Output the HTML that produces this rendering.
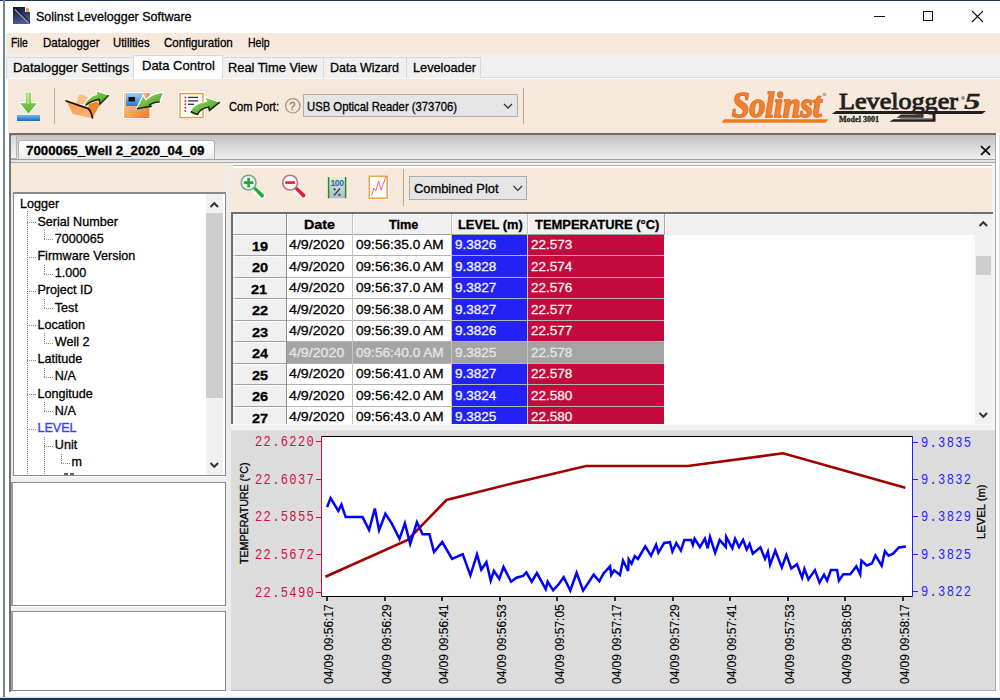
<!DOCTYPE html>
<html><head><meta charset="utf-8">
<style>
*{box-sizing:border-box;margin:0;padding:0}
html,body{width:1000px;height:700px;overflow:hidden;background:#fff;font-family:"Liberation Sans",sans-serif;color:#000;position:relative}
.a{position:absolute}
.t{position:absolute;white-space:pre;line-height:1;-webkit-text-stroke:0.3px currentColor}
svg{position:absolute;overflow:visible}
</style></head><body>
<div class="a" style="left:0px;top:0px;width:1000px;height:1px;background:#1b355a"></div>
<div class="a" style="left:3px;top:0px;width:2px;height:700px;background:#6d879a"></div>
<div class="a" style="left:0px;top:697px;width:1000px;height:1px;background:#d8dde2"></div>
<div class="a" style="left:0px;top:698px;width:1000px;height:2px;background:#163a5e"></div>
<svg style="left:13px;top:7px;" width="18" height="18" viewBox="0 0 18 18"><defs><linearGradient id="ti" x1="0" y1="0" x2="0.3" y2="1"><stop offset="0" stop-color="#0c1228"/><stop offset="1" stop-color="#4a5c9c"/></linearGradient></defs>
<rect x="0" y="0" width="17" height="17" fill="url(#ti)"/><rect x="12" y="0" width="5" height="5" fill="#fff"/><rect x="13" y="1" width="3" height="4" fill="#e8a85c"/>
<line x1="2" y1="2.5" x2="15.5" y2="16" stroke="#9a9aa0" stroke-width="1.3"/><line x1="3.5" y1="2" x2="17" y2="15.5" stroke="#0a0a10" stroke-width="1"/></svg>
<div class="a" style="left:874px;top:16px;width:11px;height:1px;background:#111"></div>
<div class="a" style="left:923px;top:11px;width:10px;height:10px;border:1px solid #111"></div>
<svg style="left:971px;top:10px;" width="13" height="13" viewBox="0 0 13 13"><path d="M1 1 L12 12 M12 1 L1 12" stroke="#111" stroke-width="1.1"/></svg>
<div class="a" style="left:6px;top:33px;width:994px;height:21px;background:#f6e9dc"></div>
<div class="a" style="left:6px;top:54px;width:994px;height:24px;background:#f0f0f0;border-bottom:1px solid #d9d9d9"></div>
<div class="a" style="left:6px;top:78px;width:994px;height:1px;background:#fbfbfb"></div>
<div class="a" style="left:6px;top:57px;width:128px;height:21px;background:#f0f0f0;border:1px solid #d9d9d9;border-bottom:none"></div>
<div class="a" style="left:222px;top:57px;width:102px;height:21px;background:#f0f0f0;border:1px solid #d9d9d9;border-bottom:none"></div>
<div class="a" style="left:323px;top:57px;width:84px;height:21px;background:#f0f0f0;border:1px solid #d9d9d9;border-bottom:none"></div>
<div class="a" style="left:406px;top:57px;width:75px;height:21px;background:#f0f0f0;border:1px solid #d9d9d9;border-bottom:none"></div>
<div class="a" style="left:133px;top:55px;width:90px;height:24px;background:#fff;border:1px solid #d9d9d9;border-bottom:none"></div>
<div class="a" style="left:8px;top:79px;width:992px;height:54px;background:#f6e9dc"></div>
<div class="a" style="left:54px;top:88px;width:1px;height:36px;background:#b8b0a8"></div>
<div class="a" style="left:303px;top:94px;width:215px;height:23px;background:#e5e5e5;border:1px solid #adadad"></div>
<div class="a" style="left:523px;top:88px;width:1px;height:36px;background:#b0a89e"></div>
<div class="a" style="left:9px;top:133px;width:987px;height:2px;background:#6c6c6c"></div>
<div class="a" style="left:9px;top:133px;width:2px;height:559px;background:#747474"></div>
<div class="a" style="left:11px;top:135px;width:985px;height:24px;background:linear-gradient(#c2c2c2,#d4d4d4 40%,#eeeeee)"></div>
<div class="a" style="left:11px;top:136px;width:6px;height:23px;background:linear-gradient(#d8d8d8,#f4f4f4);border-right:1px solid #b4b4b4;border-bottom:1px solid #b4b4b4"></div>
<div class="a" style="left:18px;top:140px;width:197px;height:20px;background:linear-gradient(#ffffff,#f6f6f6 60%,#e8e8e8);border:1px solid #b0b0b0;border-bottom:none;border-radius:3px 3px 0 0"></div>
<div class="a" style="left:11px;top:159px;width:985px;height:1px;background:#a0a0a0"></div>
<div class="a" style="left:11px;top:160px;width:985px;height:2px;background:#e4e6e6"></div>
<div class="a" style="left:11px;top:162px;width:985px;height:1px;background:#a8a8a8"></div>
<div class="a" style="left:995px;top:135px;width:1px;height:556px;background:#aaaaaa"></div>
<div class="a" style="left:999px;top:135px;width:1px;height:556px;background:#e2e2e2"></div>
<div class="a" style="left:11px;top:163px;width:215px;height:30px;background:#f6e9dc"></div>
<div class="a" style="left:11px;top:193px;width:2px;height:283px;background:#ebebeb"></div>
<div class="a" style="left:13px;top:192px;width:213px;height:284px;background:#fff;border:1px solid #8a8a8a;border-top:2px solid #8a8a8a"></div>
<div class="a" style="left:206px;top:194px;width:17px;height:281px;background:#f0f0f0"></div>
<div class="a" style="left:206px;top:213px;width:17px;height:185px;background:#cdcdcd"></div>
<div class="a" style="left:11px;top:476px;width:215px;height:6px;background:#efefef;border-top:1px solid #fcfcfc"></div>
<div class="a" style="left:11px;top:482px;width:215px;height:124px;background:#fff;border:1px solid #8a8a8a;border-left:2px solid #9a9a9a"></div>
<div class="a" style="left:11px;top:606px;width:215px;height:5px;background:#efefef;border-top:1px solid #fcfcfc"></div>
<div class="a" style="left:11px;top:611px;width:215px;height:80px;background:#fff;border:1px solid #8a8a8a;border-left:2px solid #9a9a9a"></div>
<div class="a" style="left:11px;top:691px;width:985px;height:6px;background:#fbfbfb"></div>
<div class="a" style="left:64px;top:473px;width:4px;height:2px;background:#3a3a4a;opacity:0.8"></div>
<div class="a" style="left:70px;top:473px;width:4px;height:2px;background:#3a3a4a;opacity:0.8"></div>
<div class="a" style="left:226px;top:163px;width:5px;height:528px;background:#ececec"></div>
<div class="a" style="left:231px;top:163px;width:762px;height:49px;background:#f6e9dc"></div>
<div class="a" style="left:231px;top:163px;width:762px;height:2px;background:#fcf5e6"></div>
<div class="a" style="left:233px;top:165px;width:759px;height:1px;background:#b0b0b0"></div>
<div class="a" style="left:233px;top:166px;width:759px;height:1.5px;background:#fdfdfd"></div>
<div class="a" style="left:992px;top:163px;width:3px;height:49px;background:#f4f4f4"></div>
<div class="a" style="left:403px;top:169px;width:1px;height:37px;background:#b0a89e"></div>
<div class="a" style="left:409px;top:176px;width:118px;height:24px;background:#e5e5e5;border:1px solid #adadad"></div>
<div class="a" style="left:231px;top:212px;width:762px;height:2px;background:#6e6e6e"></div>
<div class="a" style="left:231px;top:212px;width:2px;height:212px;background:#6e6e6e"></div>
<div class="a" style="left:233px;top:214px;width:742px;height:210px;background:#fff"></div>
<div class="a" style="left:233px;top:214px;width:742px;height:21px;background:#f0f0f0"></div>
<div class="a" style="left:233px;top:234px;width:431px;height:1px;background:#a0a0a0"></div>
<div class="a" style="left:233px;top:214px;width:738px;height:1px;background:#fcfcfc"></div>
<div class="a" style="left:971px;top:235px;width:4px;height:189px;background:#fbfbfb"></div>
<div class="a" style="left:975px;top:214px;width:17px;height:210px;background:#f0f0f0"></div>
<div class="a" style="left:975.5px;top:256px;width:15.5px;height:19px;background:#cdcdcd"></div>
<div class="a" style="left:231px;top:424px;width:764px;height:7px;background:#f0f0f0;border-top:1px solid #fafafa"></div>
<div class="a" style="left:992px;top:214px;width:3px;height:216px;background:#f4f4f4"></div>
<div class="a" style="left:233px;top:235px;width:53px;height:20px;background:#f0f0f0"></div>
<div class="a" style="left:233px;top:235px;width:53px;height:1px;background:#fcfcfc"></div>
<div class="a" style="left:452px;top:235px;width:75px;height:20px;background:#2222f4"></div>
<div class="a" style="left:528px;top:235px;width:136px;height:20px;background:#c40a3c"></div>
<div class="a" style="left:233px;top:255px;width:431px;height:1px;background:#b4b4b4"></div>
<div class="a" style="left:233px;top:255px;width:53px;height:1px;background:#a0a0a0"></div>
<div class="a" style="left:233px;top:256px;width:53px;height:21px;background:#f0f0f0"></div>
<div class="a" style="left:233px;top:256px;width:53px;height:1px;background:#fcfcfc"></div>
<div class="a" style="left:452px;top:256px;width:75px;height:21px;background:#2222f4"></div>
<div class="a" style="left:528px;top:256px;width:136px;height:21px;background:#c40a3c"></div>
<div class="a" style="left:233px;top:277px;width:431px;height:1px;background:#b4b4b4"></div>
<div class="a" style="left:233px;top:277px;width:53px;height:1px;background:#a0a0a0"></div>
<div class="a" style="left:233px;top:278px;width:53px;height:20px;background:#f0f0f0"></div>
<div class="a" style="left:233px;top:278px;width:53px;height:1px;background:#fcfcfc"></div>
<div class="a" style="left:452px;top:278px;width:75px;height:20px;background:#2222f4"></div>
<div class="a" style="left:528px;top:278px;width:136px;height:20px;background:#c40a3c"></div>
<div class="a" style="left:233px;top:298px;width:431px;height:1px;background:#b4b4b4"></div>
<div class="a" style="left:233px;top:298px;width:53px;height:1px;background:#a0a0a0"></div>
<div class="a" style="left:233px;top:299px;width:53px;height:21px;background:#f0f0f0"></div>
<div class="a" style="left:233px;top:299px;width:53px;height:1px;background:#fcfcfc"></div>
<div class="a" style="left:452px;top:299px;width:75px;height:21px;background:#2222f4"></div>
<div class="a" style="left:528px;top:299px;width:136px;height:21px;background:#c40a3c"></div>
<div class="a" style="left:233px;top:320px;width:431px;height:1px;background:#b4b4b4"></div>
<div class="a" style="left:233px;top:320px;width:53px;height:1px;background:#a0a0a0"></div>
<div class="a" style="left:233px;top:321px;width:53px;height:20px;background:#f0f0f0"></div>
<div class="a" style="left:233px;top:321px;width:53px;height:1px;background:#fcfcfc"></div>
<div class="a" style="left:452px;top:321px;width:75px;height:20px;background:#2222f4"></div>
<div class="a" style="left:528px;top:321px;width:136px;height:20px;background:#c40a3c"></div>
<div class="a" style="left:233px;top:341px;width:431px;height:1px;background:#b4b4b4"></div>
<div class="a" style="left:233px;top:341px;width:53px;height:1px;background:#a0a0a0"></div>
<div class="a" style="left:233px;top:342px;width:53px;height:21px;background:#f0f0f0"></div>
<div class="a" style="left:233px;top:342px;width:53px;height:1px;background:#fcfcfc"></div>
<div class="a" style="left:287px;top:342px;width:377px;height:21px;background:#a4a4a4"></div>
<div class="a" style="left:233px;top:363px;width:431px;height:1px;background:#b4b4b4"></div>
<div class="a" style="left:233px;top:363px;width:53px;height:1px;background:#a0a0a0"></div>
<div class="a" style="left:233px;top:364px;width:53px;height:20px;background:#f0f0f0"></div>
<div class="a" style="left:233px;top:364px;width:53px;height:1px;background:#fcfcfc"></div>
<div class="a" style="left:452px;top:364px;width:75px;height:20px;background:#2222f4"></div>
<div class="a" style="left:528px;top:364px;width:136px;height:20px;background:#c40a3c"></div>
<div class="a" style="left:233px;top:384px;width:431px;height:1px;background:#b4b4b4"></div>
<div class="a" style="left:233px;top:384px;width:53px;height:1px;background:#a0a0a0"></div>
<div class="a" style="left:233px;top:385px;width:53px;height:21px;background:#f0f0f0"></div>
<div class="a" style="left:233px;top:385px;width:53px;height:1px;background:#fcfcfc"></div>
<div class="a" style="left:452px;top:385px;width:75px;height:21px;background:#2222f4"></div>
<div class="a" style="left:528px;top:385px;width:136px;height:21px;background:#c40a3c"></div>
<div class="a" style="left:233px;top:406px;width:431px;height:1px;background:#b4b4b4"></div>
<div class="a" style="left:233px;top:406px;width:53px;height:1px;background:#a0a0a0"></div>
<div class="a" style="left:233px;top:407px;width:53px;height:17px;background:#f0f0f0"></div>
<div class="a" style="left:233px;top:407px;width:53px;height:1px;background:#fcfcfc"></div>
<div class="a" style="left:452px;top:407px;width:75px;height:17px;background:#2222f4"></div>
<div class="a" style="left:528px;top:407px;width:136px;height:17px;background:#c40a3c"></div>
<div class="a" style="left:286px;top:214px;width:1px;height:210px;background:#8c8c8c"></div>
<div class="a" style="left:352px;top:214px;width:1px;height:210px;background:#c4c4c4"></div>
<div class="a" style="left:451px;top:214px;width:1px;height:210px;background:#c4c4c4"></div>
<div class="a" style="left:527px;top:214px;width:1px;height:210px;background:#c4c4c4"></div>
<div class="a" style="left:664px;top:214px;width:1px;height:21px;background:#a8a8a8"></div>
<div class="a" style="left:665px;top:214px;width:1px;height:21px;background:#fcfcfc"></div>
<div class="a" style="left:234px;top:215px;width:1px;height:19px;background:#fcfcfc"></div>
<div class="a" style="left:287px;top:215px;width:1px;height:19px;background:#fcfcfc"></div>
<div class="a" style="left:353px;top:215px;width:1px;height:19px;background:#fcfcfc"></div>
<div class="a" style="left:452px;top:215px;width:1px;height:19px;background:#fcfcfc"></div>
<div class="a" style="left:528px;top:215px;width:1px;height:19px;background:#fcfcfc"></div>
<div class="a" style="left:234px;top:235px;width:1px;height:189px;background:#fbfbfb"></div>
<div class="a" style="left:231px;top:430px;width:764px;height:261px;background:#dcdcdc"></div>
<div class="a" style="left:231px;top:430px;width:764px;height:1px;background:#e4e4e4"></div>
<div class="a" style="left:231px;top:690px;width:764px;height:1px;background:#b4b4b4"></div>
<div class="a" style="left:321px;top:436px;width:592px;height:161px;background:#fff"></div>
<div class="a" style="left:321px;top:436px;width:591px;height:1px;background:#000"></div>
<div class="a" style="left:321px;top:596px;width:592px;height:1px;background:#000"></div>
<div class="a" style="left:321px;top:436px;width:1px;height:161px;background:#cc1040"></div>
<div class="a" style="left:912px;top:436px;width:1px;height:161px;background:#2020ff"></div>
<div class="a" style="left:316px;top:441px;width:5px;height:1px;background:#cc1144"></div>
<div class="a" style="left:316px;top:479px;width:5px;height:1px;background:#cc1144"></div>
<div class="a" style="left:316px;top:517px;width:5px;height:1px;background:#cc1144"></div>
<div class="a" style="left:316px;top:554px;width:5px;height:1px;background:#cc1144"></div>
<div class="a" style="left:316px;top:592px;width:5px;height:1px;background:#cc1144"></div>
<div class="a" style="left:913px;top:442px;width:5px;height:1px;background:#2424ff"></div>
<div class="a" style="left:913px;top:479px;width:5px;height:1px;background:#2424ff"></div>
<div class="a" style="left:913px;top:516px;width:5px;height:1px;background:#2424ff"></div>
<div class="a" style="left:913px;top:554px;width:5px;height:1px;background:#2424ff"></div>
<div class="a" style="left:913px;top:591px;width:5px;height:1px;background:#2424ff"></div>
<div class="a" style="left:326.0px;top:597px;width:2px;height:4px;background:#303030"></div>
<div class="a" style="left:384.0px;top:597px;width:2px;height:4px;background:#303030"></div>
<div class="a" style="left:441.0px;top:597px;width:2px;height:4px;background:#303030"></div>
<div class="a" style="left:499.0px;top:597px;width:2px;height:4px;background:#303030"></div>
<div class="a" style="left:556.0px;top:597px;width:2px;height:4px;background:#303030"></div>
<div class="a" style="left:614.0px;top:597px;width:2px;height:4px;background:#303030"></div>
<div class="a" style="left:672.0px;top:597px;width:2px;height:4px;background:#303030"></div>
<div class="a" style="left:729.0px;top:597px;width:2px;height:4px;background:#303030"></div>
<div class="a" style="left:787.0px;top:597px;width:2px;height:4px;background:#303030"></div>
<div class="a" style="left:844.0px;top:597px;width:2px;height:4px;background:#303030"></div>
<div class="a" style="left:902.0px;top:597px;width:2px;height:4px;background:#303030"></div>
<svg style="left:0;top:0" width="1000" height="700"><defs>
<linearGradient id="gArrow" x1="0" y1="0" x2="1" y2="0"><stop offset="0" stop-color="#a6dc6a"/><stop offset="0.5" stop-color="#7cc444"/><stop offset="1" stop-color="#4e9e22"/></linearGradient>
<linearGradient id="gArrowV" x1="0" y1="0" x2="0" y2="1"><stop offset="0" stop-color="#a8dc70"/><stop offset="1" stop-color="#58b02a"/></linearGradient>
<linearGradient id="gBlueBar" x1="0" y1="0" x2="0" y2="1"><stop offset="0" stop-color="#78b8f0"/><stop offset="1" stop-color="#1468c0"/></linearGradient>
<linearGradient id="gOrange" x1="0" y1="0" x2="1" y2="1"><stop offset="0" stop-color="#fbd2a6"/><stop offset="1" stop-color="#f07a22"/></linearGradient>
<linearGradient id="gOrange2" x1="0" y1="0" x2="0.4" y2="1"><stop offset="0" stop-color="#f89a48"/><stop offset="1" stop-color="#f8b070"/></linearGradient>
<linearGradient id="gBlueLbl" x1="0" y1="0" x2="0" y2="1"><stop offset="0" stop-color="#9ad0f4"/><stop offset="1" stop-color="#2a7ccc"/></linearGradient>
<linearGradient id="gGreenArr" x1="0" y1="0" x2="1" y2="1"><stop offset="0" stop-color="#a0dc68"/><stop offset="1" stop-color="#3c9a1c"/></linearGradient>
</defs>
<path d="M24.3 91 H32.7 V101.6 H40.2 L28.5 115.5 L16.8 101.6 H24.3 Z" fill="#fff" stroke="#e0d8d0" stroke-width="0.6"/>
<path d="M25.8 92.5 H31.2 V103.2 H37 L28.5 113.4 L20 103.2 H25.8 Z" fill="url(#gArrowV)"/>
<path d="M26.8 93 H29.3 V104 H26.8 Z" fill="#d0f0b0" opacity="0.6"/>
<rect x="17" y="115" width="23" height="6" fill="url(#gBlueBar)"/>
<path d="M76 104 L79 94.5 L83 95 L87 97 L90 104 Z" fill="#f9b880" opacity="0.9"/>
<path d="M88 108 L92.5 119 L100.5 104.5 L97 101 L88 104 Z" fill="#f08428" stroke="#fff" stroke-width="0.8"/>
<path d="M66 101 L88.5 108.8 L92.8 118.8 L72.5 114.5 Z" fill="url(#gOrange2)" stroke="#fff" stroke-width="0.6"/>
<path d="M65.5 100.8 L88.3 108.6 Q91.5 112 92.6 118.6" fill="none" stroke="#1a1008" stroke-width="1.7"/>
<path d="M84.5 103.8 Q88 97 96.8 94.2 L96 90.8 L108.6 95 L100 104 L99.3 99.2 Q92 100 86 105.5 Z" fill="url(#gGreenArr)" stroke="#fff" stroke-width="1.1"/>
<path d="M85.5 105.5 Q92 100.2 99.3 99.4 L100 104 L108.6 95.2" fill="none" stroke="#14300a" stroke-width="1.6"/>
<rect x="122.5" y="91.5" width="28.5" height="28" fill="#fff" stroke="#ddd" stroke-width="0.6"/>
<rect x="124" y="93" width="25.5" height="25" fill="url(#gOrange)"/>
<rect x="126" y="93" width="16" height="13" fill="url(#gBlueLbl)"/>
<rect x="128.5" y="97" width="6.5" height="4.5" fill="#181010"/>
<rect x="147" y="93" width="2.5" height="3" fill="#e89050"/>
<path d="M136.3 109 L143.3 95 L145.8 99.8 Q152 93.5 163.8 92.2 Q161.5 97.5 159.8 101.8 Q154 101.5 149.8 104.5 L150.8 106.5 Z" fill="url(#gGreenArr)" stroke="#fff" stroke-width="1.2"/>
<path d="M136.8 108.8 L150.8 106.3 L149.8 104.5 Q154 101.8 159.8 101.8" fill="none" stroke="#10280a" stroke-width="1.6"/>
<rect x="177.8" y="91" width="27.4" height="28.6" fill="#fff" stroke="#ddd" stroke-width="0.6"/>
<rect x="180" y="93.6" width="23" height="24" fill="none" stroke="#eb9a30" stroke-width="1.4"/>
<g fill="#e8202a"><circle cx="185.4" cy="97.4" r="1"/><circle cx="185.4" cy="100.9" r="1"/><circle cx="185.4" cy="104.3" r="1"/><circle cx="185.4" cy="107.7" r="1"/><circle cx="185.4" cy="111.1" r="1"/></g>
<g stroke="#303038" stroke-width="1.3"><line x1="188" y1="97.4" x2="198" y2="97.4"/><line x1="188" y1="100.9" x2="198" y2="100.9"/><line x1="188" y1="104.3" x2="194" y2="104.3"/></g>
<path d="M190.3 110.8 Q195 103 206.5 101.5 L204.8 97 L219.8 102.2 L209.5 110.3 L208.8 106.8 Q200 108 197.5 114.5 Q193 113.5 190.3 110.8 Z" fill="url(#gGreenArr)" stroke="#fff" stroke-width="1.1"/>
<path d="M190.8 111.5 Q194 114 197.5 114.3 Q200.5 108 208.8 107 L209.5 110.3 L219.8 102.2" fill="none" stroke="#10280a" stroke-width="1.7"/>
<circle cx="292.8" cy="105.8" r="7.2" fill="none" stroke="#a09482" stroke-width="1.2"/>
<path d="M504 104 L508 108 L512 104" fill="none" stroke="#333" stroke-width="1.3"/>
<path d="M721.5 122.8 L724 119.2 L828.5 119.2 L825.5 122.8 Z" fill="#f07820"/>
<circle cx="824.5" cy="94.5" r="1.8" fill="#b0a8a0"/>
<circle cx="963" cy="98" r="1.9" fill="#9a928a"/>
<path d="M831.8 114.1 L836 111.1 L986 111.1 L982 114.1 Z" fill="#231f1e"/>
<path d="M896.5 117.7 L901 114.4 L920.7 114.4 L920.7 111 L923.5 111 L923.5 117.7 Z" fill="#3a3432"/><path d="M889.4 121.8 L893.5 119.2 L932.5 119.2 L932.5 112 L935.5 112 L935.5 121.8 Z" fill="#231f1e"/><path d="M900 118.5 L933 118.5" stroke="#8a8480" stroke-width="1"/>
<path d="M981 146.2 L990 154.8 M990 146.2 L981 154.8" stroke="#111" stroke-width="1.8"/>
<path d="M210.5 207 L214.3 203.2 L218.1 207" fill="none" stroke="#333" stroke-width="2"/>
<path d="M210.5 463 L214.3 466.8 L218.1 463" fill="none" stroke="#333" stroke-width="2"/>
<line x1="27.0" y1="222.5" x2="36.0" y2="222.5" stroke="#858585" stroke-width="1" stroke-dasharray="1 1"/>
<line x1="44.0" y1="239.5" x2="53.0" y2="239.5" stroke="#858585" stroke-width="1" stroke-dasharray="1 1"/>
<line x1="27.0" y1="257.5" x2="36.0" y2="257.5" stroke="#858585" stroke-width="1" stroke-dasharray="1 1"/>
<line x1="44.0" y1="274.5" x2="53.0" y2="274.5" stroke="#858585" stroke-width="1" stroke-dasharray="1 1"/>
<line x1="27.0" y1="291.5" x2="36.0" y2="291.5" stroke="#858585" stroke-width="1" stroke-dasharray="1 1"/>
<line x1="44.0" y1="308.5" x2="53.0" y2="308.5" stroke="#858585" stroke-width="1" stroke-dasharray="1 1"/>
<line x1="27.0" y1="325.5" x2="36.0" y2="325.5" stroke="#858585" stroke-width="1" stroke-dasharray="1 1"/>
<line x1="44.0" y1="343.5" x2="53.0" y2="343.5" stroke="#858585" stroke-width="1" stroke-dasharray="1 1"/>
<line x1="27.0" y1="360.5" x2="36.0" y2="360.5" stroke="#858585" stroke-width="1" stroke-dasharray="1 1"/>
<line x1="44.0" y1="377.5" x2="53.0" y2="377.5" stroke="#858585" stroke-width="1" stroke-dasharray="1 1"/>
<line x1="27.0" y1="394.5" x2="36.0" y2="394.5" stroke="#858585" stroke-width="1" stroke-dasharray="1 1"/>
<line x1="44.0" y1="411.5" x2="53.0" y2="411.5" stroke="#858585" stroke-width="1" stroke-dasharray="1 1"/>
<line x1="27.0" y1="429.5" x2="36.0" y2="429.5" stroke="#858585" stroke-width="1" stroke-dasharray="1 1"/>
<line x1="44.0" y1="446.5" x2="53.0" y2="446.5" stroke="#858585" stroke-width="1" stroke-dasharray="1 1"/>
<line x1="61.0" y1="463.5" x2="70.0" y2="463.5" stroke="#858585" stroke-width="1" stroke-dasharray="1 1"/>
<line x1="27.5" y1="211" x2="27.5" y2="474" stroke="#858585" stroke-width="1" stroke-dasharray="1 1"/>
<line x1="44.5" y1="230" x2="44.5" y2="239.5" stroke="#858585" stroke-width="1" stroke-dasharray="1 1"/>
<line x1="44.5" y1="265" x2="44.5" y2="274.5" stroke="#858585" stroke-width="1" stroke-dasharray="1 1"/>
<line x1="44.5" y1="299" x2="44.5" y2="308.5" stroke="#858585" stroke-width="1" stroke-dasharray="1 1"/>
<line x1="44.5" y1="333" x2="44.5" y2="343.5" stroke="#858585" stroke-width="1" stroke-dasharray="1 1"/>
<line x1="44.5" y1="368" x2="44.5" y2="377.5" stroke="#858585" stroke-width="1" stroke-dasharray="1 1"/>
<line x1="44.5" y1="402" x2="44.5" y2="411.5" stroke="#858585" stroke-width="1" stroke-dasharray="1 1"/>
<line x1="44.5" y1="437" x2="44.5" y2="474" stroke="#858585" stroke-width="1" stroke-dasharray="1 1"/>
<line x1="61.5" y1="454" x2="61.5" y2="463.5" stroke="#858585" stroke-width="1" stroke-dasharray="1 1"/>
<line x1="254" y1="189" x2="262.3" y2="196.6" stroke="#fff" stroke-width="6.5" stroke-linecap="round" opacity="0.8"/>
<path d="M253 188.8 L255.2 186.6 L263.8 194.6 Q264.5 197.8 261.3 197.6 Z" fill="#22aa3c"/>
<circle cx="248.6" cy="182.6" r="7.4" fill="#fafcfa" stroke="#6eae82" stroke-width="1.6"/>
<path d="M248.6 177.8 V187.4 M243.8 182.6 H253.4" stroke="#20a83a" stroke-width="2.6"/>
<line x1="295.5" y1="189" x2="303.8" y2="196.6" stroke="#fff" stroke-width="6.5" stroke-linecap="round" opacity="0.8"/>
<path d="M294.5 188.8 L296.7 186.6 L305.3 194.6 Q306 197.8 302.8 197.6 Z" fill="#e81a30"/>
<circle cx="290.1" cy="182.6" r="7.4" fill="#fafcfc" stroke="#c87080" stroke-width="1.6"/>
<path d="M285.3 182.6 H294.9" stroke="#ee1c2c" stroke-width="2.6"/>
<defs><linearGradient id="g100" x1="0" y1="0" x2="0" y2="1"><stop offset="0" stop-color="#e4ecd4"/><stop offset="1" stop-color="#a4c0c0"/></linearGradient></defs>
<rect x="328" y="177.3" width="18" height="20.8" fill="url(#g100)"/>
<path d="M328.6 177 V198.2 M345.6 177 V198.2" stroke="#2a8a3c" stroke-width="1.5"/>
<text x="337" y="186" font-family="Liberation Sans" font-size="8.6" font-weight="700" fill="#2a68a8" text-anchor="middle" letter-spacing="-0.4">100</text>
<path d="M334 195.5 L340 188.5" stroke="#1e3a6a" stroke-width="1.2"/><circle cx="334.6" cy="189.3" r="1.1" fill="#1e3a6a"/><circle cx="339.4" cy="194.8" r="1.1" fill="#1e3a6a"/>
<rect x="367.5" y="174.5" width="21.5" height="25.5" fill="#fff" stroke="#ececec" stroke-width="1"/>
<rect x="369.2" y="176.2" width="18" height="22" fill="#fff" stroke="#eea64e" stroke-width="1.6"/>
<path d="M371.5 195.5 L374 188 L375.8 191 L378.5 181 L381 190 L386 176.5" fill="none" stroke="#e86878" stroke-width="1"/>
<path d="M513.5 186 L517.8 190.3 L522 186" fill="none" stroke="#333" stroke-width="1.2"/>
<path d="M979.5 226 L983.3 222.2 L987.1 226" fill="none" stroke="#333" stroke-width="2"/>
<path d="M979.5 413 L983.3 416.8 L987.1 413" fill="none" stroke="#333" stroke-width="2"/>
<polyline points="325.4,576.7 407.7,540.0 446.5,500.0 512.0,483.5 586.0,466.0 687.7,466.0 783.0,453.3 905.3,487.8" fill="none" stroke="#a00000" stroke-width="2.6" stroke-linejoin="miter" stroke-miterlimit="4"/>
<polyline points="327.1,507.1 330.6,498.0 338.3,510.9 341.4,504.6 345.7,517.1 362.6,517.1 369.1,530.1 374.8,508.6 379.1,530.3 385.4,513.7 391.7,523.4 399.5,538.9 404.9,523.4 410.2,544.0 416.9,522.3 422.6,534.3 429.4,534.3 434.0,552.0 442.2,542.0 452.1,558.9 462.7,554.1 470.4,575.4 477.0,554.3 481.3,569.7 486.4,562.0 490.7,580.6 493.9,570.9 499.3,578.9 503.5,566.9 511.1,581.7 516.4,577.7 523.0,576.0 526.3,572.3 531.7,581.7 536.9,573.1 545.7,589.1 547.7,581.7 553.1,590.3 558.9,584.0 563.7,577.1 570.3,590.6 576.6,572.8 583.1,590.6 593.7,574.6 599.3,581.3 603.6,573.3 610.1,566.4 611.2,575.0 614.2,570.4 619.9,575.0 623.0,560.5 628.1,571.0 628.7,559.3 631.6,563.6 634.8,556.1 637.9,559.0 645.3,546.4 651.0,555.6 656.1,544.7 658.4,552.7 664.1,543.0 669.9,542.2 672.4,551.6 676.3,543.1 680.9,550.6 684.3,540.0 691.1,540.0 692.9,544.9 694.6,538.6 699.9,547.1 704.9,538.6 707.7,548.3 710.0,536.9 715.1,552.9 719.7,540.0 725.8,547.1 726.2,536.9 732.3,548.3 735.1,538.8 739.1,547.1 743.1,540.0 746.7,549.5 749.6,544.0 752.8,553.7 760.4,547.4 765.0,558.9 767.9,551.8 770.1,564.6 775.3,550.6 781.8,567.4 786.4,554.9 791.3,568.6 797.0,564.3 802.1,577.7 804.4,568.9 808.4,579.4 814.9,570.1 819.5,582.6 824.0,574.6 827.1,580.6 830.9,570.1 837.1,570.1 838.9,580.6 843.4,574.3 850.3,574.3 856.3,566.3 860.2,574.3 861.4,560.6 866.9,565.5 872.0,563.4 875.4,555.4 881.7,565.7 884.9,551.1 888.6,555.7 893.1,553.7 898.9,547.4 905.9,546.5" fill="none" stroke="#0000ff" stroke-width="2.5" stroke-linejoin="miter" stroke-miterlimit="4"/></svg>
<div class="t" style="left:36.00px;top:9.86px;font-size:13.4px;font-weight:400;color:#000;font-family:'Liberation Sans';font-style:normal;transform:scaleX(0.9325);transform-origin:0 0;">Solinst Levelogger Software</div>
<div class="t" style="left:11.30px;top:36.70px;font-size:12.4px;font-weight:400;color:#000;font-family:'Liberation Sans';font-style:normal;transform:scaleX(0.8413);transform-origin:0 0;">File</div>
<div class="t" style="left:42.50px;top:36.70px;font-size:12.4px;font-weight:400;color:#000;font-family:'Liberation Sans';font-style:normal;transform:scaleX(0.9320);transform-origin:0 0;">Datalogger</div>
<div class="t" style="left:113.00px;top:36.70px;font-size:12.4px;font-weight:400;color:#000;font-family:'Liberation Sans';font-style:normal;transform:scaleX(0.9164);transform-origin:0 0;">Utilities</div>
<div class="t" style="left:164.00px;top:36.70px;font-size:12.4px;font-weight:400;color:#000;font-family:'Liberation Sans';font-style:normal;transform:scaleX(0.9335);transform-origin:0 0;">Configuration</div>
<div class="t" style="left:248.00px;top:36.70px;font-size:12.4px;font-weight:400;color:#000;font-family:'Liberation Sans';font-style:normal;transform:scaleX(0.8476);transform-origin:0 0;">Help</div>
<div class="t" style="left:13.00px;top:61.26px;font-size:13.4px;font-weight:400;color:#000;font-family:'Liberation Sans';font-style:normal;transform:scaleX(0.9862);transform-origin:0 0;">Datalogger Settings</div>
<div class="t" style="left:142.00px;top:59.46px;font-size:13.4px;font-weight:400;color:#000;font-family:'Liberation Sans';font-style:normal;transform:scaleX(0.9709);transform-origin:0 0;">Data Control</div>
<div class="t" style="left:228.00px;top:61.26px;font-size:13.4px;font-weight:400;color:#000;font-family:'Liberation Sans';font-style:normal;transform:scaleX(0.9592);transform-origin:0 0;">Real Time View</div>
<div class="t" style="left:330.00px;top:61.26px;font-size:13.4px;font-weight:400;color:#000;font-family:'Liberation Sans';font-style:normal;transform:scaleX(0.9366);transform-origin:0 0;">Data Wizard</div>
<div class="t" style="left:413.00px;top:61.26px;font-size:13.4px;font-weight:400;color:#000;font-family:'Liberation Sans';font-style:normal;transform:scaleX(0.9507);transform-origin:0 0;">Leveloader</div>
<div class="t" style="left:228.50px;top:101.14px;font-size:12px;font-weight:400;color:#000;font-family:'Liberation Sans';font-style:normal;transform:scaleX(0.9257);transform-origin:0 0;">Com Port:</div>
<div class="t" style="left:289.20px;top:101.19px;font-size:11px;font-weight:400;color:#8a7e70;font-family:'Liberation Sans';font-style:normal;">?</div>
<div class="t" style="left:306.80px;top:101.10px;font-size:12.4px;font-weight:400;color:#000;font-family:'Liberation Sans';font-style:normal;transform:scaleX(0.9112);transform-origin:0 0;">USB Optical Reader (373706)</div>
<div class="t" style="left:731.50px;top:87.91px;font-size:35px;font-weight:700;color:#f47f2c;font-family:'Liberation Serif';font-style:italic;transform:scaleX(0.9019);transform-origin:0 0;-webkit-text-stroke:1.6px #cd6a2a;paint-order:stroke fill;">Solinst</div>
<div class="t" style="left:838.50px;top:89.61px;font-size:23.4px;font-weight:400;color:#231f1e;font-family:'Liberation Serif';font-style:normal;transform:scaleX(1.1172);transform-origin:0 0;-webkit-text-stroke:0.9px #231f1e;">Levelogger</div>
<div class="t" style="left:963.50px;top:89.65px;font-size:23px;font-weight:700;color:#231f1e;font-family:'Liberation Serif';font-style:italic;transform:scaleX(1.4348);transform-origin:0 0;">5</div>
<div class="t" style="left:838.60px;top:115.84px;font-size:7.6px;font-weight:700;color:#231f1e;font-family:'Liberation Serif';font-style:normal;transform:scaleX(1.0592);transform-origin:0 0;">Model 3001</div>
<div class="t" style="left:26.00px;top:144.76px;font-size:12.8px;font-weight:700;color:#000;font-family:'Liberation Sans';font-style:normal;transform:scaleX(1.0379);transform-origin:0 0;">7000065_Well 2_2020_04_09</div>
<div class="t" style="left:20.00px;top:198.43px;font-size:12.6px;font-weight:400;color:#000;font-family:'Liberation Sans';font-style:normal;">Logger</div>
<div class="t" style="left:37.40px;top:215.63px;font-size:12.6px;font-weight:400;color:#000;font-family:'Liberation Sans';font-style:normal;">Serial Number</div>
<div class="t" style="left:54.80px;top:232.83px;font-size:12.6px;font-weight:400;color:#000;font-family:'Liberation Sans';font-style:normal;">7000065</div>
<div class="t" style="left:37.40px;top:250.03px;font-size:12.6px;font-weight:400;color:#000;font-family:'Liberation Sans';font-style:normal;">Firmware Version</div>
<div class="t" style="left:54.80px;top:267.23px;font-size:12.6px;font-weight:400;color:#000;font-family:'Liberation Sans';font-style:normal;">1.000</div>
<div class="t" style="left:37.40px;top:284.43px;font-size:12.6px;font-weight:400;color:#000;font-family:'Liberation Sans';font-style:normal;">Project ID</div>
<div class="t" style="left:54.80px;top:301.63px;font-size:12.6px;font-weight:400;color:#000;font-family:'Liberation Sans';font-style:normal;">Test</div>
<div class="t" style="left:37.40px;top:318.83px;font-size:12.6px;font-weight:400;color:#000;font-family:'Liberation Sans';font-style:normal;">Location</div>
<div class="t" style="left:54.80px;top:336.03px;font-size:12.6px;font-weight:400;color:#000;font-family:'Liberation Sans';font-style:normal;">Well 2</div>
<div class="t" style="left:37.40px;top:353.23px;font-size:12.6px;font-weight:400;color:#000;font-family:'Liberation Sans';font-style:normal;">Latitude</div>
<div class="t" style="left:54.80px;top:370.43px;font-size:12.6px;font-weight:400;color:#000;font-family:'Liberation Sans';font-style:normal;">N/A</div>
<div class="t" style="left:37.40px;top:387.63px;font-size:12.6px;font-weight:400;color:#000;font-family:'Liberation Sans';font-style:normal;">Longitude</div>
<div class="t" style="left:54.80px;top:404.83px;font-size:12.6px;font-weight:400;color:#000;font-family:'Liberation Sans';font-style:normal;">N/A</div>
<div class="t" style="left:37.40px;top:422.03px;font-size:12.6px;font-weight:400;color:#3b3bff;font-family:'Liberation Sans';font-style:normal;">LEVEL</div>
<div class="t" style="left:54.80px;top:439.23px;font-size:12.6px;font-weight:400;color:#000;font-family:'Liberation Sans';font-style:normal;">Unit</div>
<div class="t" style="left:71.50px;top:456.43px;font-size:12.6px;font-weight:400;color:#000;font-family:'Liberation Sans';font-style:normal;">m</div>
<div class="t" style="left:414.00px;top:181.99px;font-size:13px;font-weight:400;color:#000;font-family:'Liberation Sans';font-style:normal;transform:scaleX(0.9908);transform-origin:0 0;">Combined Plot</div>
<div class="t" style="left:251.60px;top:239.82px;font-size:13.2px;font-weight:700;color:#000;font-family:'Liberation Sans';font-style:normal;transform:scaleX(1.0973);transform-origin:0 0;">19</div>
<div class="t" style="left:288.70px;top:238.46px;font-size:13.4px;font-weight:400;color:#000;font-family:'Liberation Sans';font-style:normal;transform:scaleX(1.0609);transform-origin:0 0;">4/9/2020</div>
<div class="t" style="left:355.60px;top:238.46px;font-size:13.4px;font-weight:400;color:#000;font-family:'Liberation Sans';font-style:normal;transform:scaleX(1.0144);transform-origin:0 0;">09:56:35.0 AM</div>
<div class="t" style="left:454.60px;top:238.46px;font-size:13.4px;font-weight:400;color:#f4f4ff;font-family:'Liberation Sans';font-style:normal;transform:scaleX(1.0105);transform-origin:0 0;">9.3826</div>
<div class="t" style="left:530.90px;top:238.46px;font-size:13.4px;font-weight:400;color:#fff0f0;font-family:'Liberation Sans';font-style:normal;transform:scaleX(1.0105);transform-origin:0 0;">22.573</div>
<div class="t" style="left:251.60px;top:261.32px;font-size:13.2px;font-weight:700;color:#000;font-family:'Liberation Sans';font-style:normal;transform:scaleX(1.0973);transform-origin:0 0;">20</div>
<div class="t" style="left:288.70px;top:259.96px;font-size:13.4px;font-weight:400;color:#000;font-family:'Liberation Sans';font-style:normal;transform:scaleX(1.0609);transform-origin:0 0;">4/9/2020</div>
<div class="t" style="left:355.60px;top:259.96px;font-size:13.4px;font-weight:400;color:#000;font-family:'Liberation Sans';font-style:normal;transform:scaleX(1.0144);transform-origin:0 0;">09:56:36.0 AM</div>
<div class="t" style="left:454.60px;top:259.96px;font-size:13.4px;font-weight:400;color:#f4f4ff;font-family:'Liberation Sans';font-style:normal;transform:scaleX(1.0105);transform-origin:0 0;">9.3828</div>
<div class="t" style="left:530.90px;top:259.96px;font-size:13.4px;font-weight:400;color:#fff0f0;font-family:'Liberation Sans';font-style:normal;transform:scaleX(1.0105);transform-origin:0 0;">22.574</div>
<div class="t" style="left:251.10px;top:282.82px;font-size:13.2px;font-weight:700;color:#000;font-family:'Liberation Sans';font-style:normal;transform:scaleX(1.0973);transform-origin:0 0;">21</div>
<div class="t" style="left:288.70px;top:281.46px;font-size:13.4px;font-weight:400;color:#000;font-family:'Liberation Sans';font-style:normal;transform:scaleX(1.0609);transform-origin:0 0;">4/9/2020</div>
<div class="t" style="left:355.60px;top:281.46px;font-size:13.4px;font-weight:400;color:#000;font-family:'Liberation Sans';font-style:normal;transform:scaleX(1.0144);transform-origin:0 0;">09:56:37.0 AM</div>
<div class="t" style="left:454.60px;top:281.46px;font-size:13.4px;font-weight:400;color:#f4f4ff;font-family:'Liberation Sans';font-style:normal;transform:scaleX(1.0105);transform-origin:0 0;">9.3827</div>
<div class="t" style="left:530.90px;top:281.46px;font-size:13.4px;font-weight:400;color:#fff0f0;font-family:'Liberation Sans';font-style:normal;transform:scaleX(1.0105);transform-origin:0 0;">22.576</div>
<div class="t" style="left:251.60px;top:304.32px;font-size:13.2px;font-weight:700;color:#000;font-family:'Liberation Sans';font-style:normal;transform:scaleX(1.0973);transform-origin:0 0;">22</div>
<div class="t" style="left:288.70px;top:302.96px;font-size:13.4px;font-weight:400;color:#000;font-family:'Liberation Sans';font-style:normal;transform:scaleX(1.0609);transform-origin:0 0;">4/9/2020</div>
<div class="t" style="left:355.60px;top:302.96px;font-size:13.4px;font-weight:400;color:#000;font-family:'Liberation Sans';font-style:normal;transform:scaleX(1.0144);transform-origin:0 0;">09:56:38.0 AM</div>
<div class="t" style="left:454.60px;top:302.96px;font-size:13.4px;font-weight:400;color:#f4f4ff;font-family:'Liberation Sans';font-style:normal;transform:scaleX(1.0105);transform-origin:0 0;">9.3827</div>
<div class="t" style="left:530.90px;top:302.96px;font-size:13.4px;font-weight:400;color:#fff0f0;font-family:'Liberation Sans';font-style:normal;transform:scaleX(1.0105);transform-origin:0 0;">22.577</div>
<div class="t" style="left:251.60px;top:325.82px;font-size:13.2px;font-weight:700;color:#000;font-family:'Liberation Sans';font-style:normal;transform:scaleX(1.0973);transform-origin:0 0;">23</div>
<div class="t" style="left:288.70px;top:324.46px;font-size:13.4px;font-weight:400;color:#000;font-family:'Liberation Sans';font-style:normal;transform:scaleX(1.0609);transform-origin:0 0;">4/9/2020</div>
<div class="t" style="left:355.60px;top:324.46px;font-size:13.4px;font-weight:400;color:#000;font-family:'Liberation Sans';font-style:normal;transform:scaleX(1.0144);transform-origin:0 0;">09:56:39.0 AM</div>
<div class="t" style="left:454.60px;top:324.46px;font-size:13.4px;font-weight:400;color:#f4f4ff;font-family:'Liberation Sans';font-style:normal;transform:scaleX(1.0105);transform-origin:0 0;">9.3826</div>
<div class="t" style="left:530.90px;top:324.46px;font-size:13.4px;font-weight:400;color:#fff0f0;font-family:'Liberation Sans';font-style:normal;transform:scaleX(1.0105);transform-origin:0 0;">22.577</div>
<div class="t" style="left:251.60px;top:347.32px;font-size:13.2px;font-weight:700;color:#000;font-family:'Liberation Sans';font-style:normal;transform:scaleX(1.0973);transform-origin:0 0;">24</div>
<div class="t" style="left:288.70px;top:345.96px;font-size:13.4px;font-weight:400;color:#e6e6e6;font-family:'Liberation Sans';font-style:normal;transform:scaleX(1.0609);transform-origin:0 0;">4/9/2020</div>
<div class="t" style="left:355.60px;top:345.96px;font-size:13.4px;font-weight:400;color:#e6e6e6;font-family:'Liberation Sans';font-style:normal;transform:scaleX(1.0144);transform-origin:0 0;">09:56:40.0 AM</div>
<div class="t" style="left:454.60px;top:345.96px;font-size:13.4px;font-weight:400;color:#e6e6e6;font-family:'Liberation Sans';font-style:normal;transform:scaleX(1.0105);transform-origin:0 0;">9.3825</div>
<div class="t" style="left:530.90px;top:345.96px;font-size:13.4px;font-weight:400;color:#e6e6e6;font-family:'Liberation Sans';font-style:normal;transform:scaleX(1.0105);transform-origin:0 0;">22.578</div>
<div class="t" style="left:251.60px;top:368.82px;font-size:13.2px;font-weight:700;color:#000;font-family:'Liberation Sans';font-style:normal;transform:scaleX(1.0973);transform-origin:0 0;">25</div>
<div class="t" style="left:288.70px;top:367.46px;font-size:13.4px;font-weight:400;color:#000;font-family:'Liberation Sans';font-style:normal;transform:scaleX(1.0609);transform-origin:0 0;">4/9/2020</div>
<div class="t" style="left:355.60px;top:367.46px;font-size:13.4px;font-weight:400;color:#000;font-family:'Liberation Sans';font-style:normal;transform:scaleX(1.0144);transform-origin:0 0;">09:56:41.0 AM</div>
<div class="t" style="left:454.60px;top:367.46px;font-size:13.4px;font-weight:400;color:#f4f4ff;font-family:'Liberation Sans';font-style:normal;transform:scaleX(1.0105);transform-origin:0 0;">9.3827</div>
<div class="t" style="left:530.90px;top:367.46px;font-size:13.4px;font-weight:400;color:#fff0f0;font-family:'Liberation Sans';font-style:normal;transform:scaleX(1.0105);transform-origin:0 0;">22.578</div>
<div class="t" style="left:251.60px;top:390.32px;font-size:13.2px;font-weight:700;color:#000;font-family:'Liberation Sans';font-style:normal;transform:scaleX(1.0973);transform-origin:0 0;">26</div>
<div class="t" style="left:288.70px;top:388.96px;font-size:13.4px;font-weight:400;color:#000;font-family:'Liberation Sans';font-style:normal;transform:scaleX(1.0609);transform-origin:0 0;">4/9/2020</div>
<div class="t" style="left:355.60px;top:388.96px;font-size:13.4px;font-weight:400;color:#000;font-family:'Liberation Sans';font-style:normal;transform:scaleX(1.0144);transform-origin:0 0;">09:56:42.0 AM</div>
<div class="t" style="left:454.60px;top:388.96px;font-size:13.4px;font-weight:400;color:#f4f4ff;font-family:'Liberation Sans';font-style:normal;transform:scaleX(1.0105);transform-origin:0 0;">9.3824</div>
<div class="t" style="left:530.90px;top:388.96px;font-size:13.4px;font-weight:400;color:#fff0f0;font-family:'Liberation Sans';font-style:normal;transform:scaleX(1.0105);transform-origin:0 0;">22.580</div>
<div class="t" style="left:251.60px;top:411.82px;font-size:13.2px;font-weight:700;color:#000;font-family:'Liberation Sans';font-style:normal;transform:scaleX(1.0973);transform-origin:0 0;">27</div>
<div class="t" style="left:288.70px;top:410.46px;font-size:13.4px;font-weight:400;color:#000;font-family:'Liberation Sans';font-style:normal;transform:scaleX(1.0609);transform-origin:0 0;">4/9/2020</div>
<div class="t" style="left:355.60px;top:410.46px;font-size:13.4px;font-weight:400;color:#000;font-family:'Liberation Sans';font-style:normal;transform:scaleX(1.0144);transform-origin:0 0;">09:56:43.0 AM</div>
<div class="t" style="left:454.60px;top:410.46px;font-size:13.4px;font-weight:400;color:#f4f4ff;font-family:'Liberation Sans';font-style:normal;transform:scaleX(1.0105);transform-origin:0 0;">9.3825</div>
<div class="t" style="left:530.90px;top:410.46px;font-size:13.4px;font-weight:400;color:#fff0f0;font-family:'Liberation Sans';font-style:normal;transform:scaleX(1.0105);transform-origin:0 0;">22.580</div>
<div class="t" style="left:304.00px;top:218.32px;font-size:13.2px;font-weight:700;color:#000;font-family:'Liberation Sans';font-style:normal;transform:scaleX(1.0842);transform-origin:0 0;">Date</div>
<div class="t" style="left:388.60px;top:218.32px;font-size:13.2px;font-weight:700;color:#000;font-family:'Liberation Sans';font-style:normal;transform:scaleX(0.9625);transform-origin:0 0;">Time</div>
<div class="t" style="left:458.20px;top:218.32px;font-size:13.2px;font-weight:700;color:#000;font-family:'Liberation Sans';font-style:normal;transform:scaleX(0.9754);transform-origin:0 0;">LEVEL (m)</div>
<div class="t" style="left:534.50px;top:218.32px;font-size:13.2px;font-weight:700;color:#000;font-family:'Liberation Sans';font-style:normal;transform:scaleX(0.9815);transform-origin:0 0;">TEMPERATURE (°C)</div>
<div class="t" style="left:255.00px;top:435.99px;font-size:13.85px;font-weight:400;color:#cc1144;font-family:'Liberation Mono';font-style:normal;-webkit-text-stroke:0;letter-spacing:1.5px;transform:scaleX(0.876);transform-origin:0 0;">22.6220</div>
<div class="t" style="left:255.00px;top:473.79px;font-size:13.85px;font-weight:400;color:#cc1144;font-family:'Liberation Mono';font-style:normal;-webkit-text-stroke:0;letter-spacing:1.5px;transform:scaleX(0.876);transform-origin:0 0;">22.6037</div>
<div class="t" style="left:255.00px;top:511.49px;font-size:13.85px;font-weight:400;color:#cc1144;font-family:'Liberation Mono';font-style:normal;-webkit-text-stroke:0;letter-spacing:1.5px;transform:scaleX(0.876);transform-origin:0 0;">22.5855</div>
<div class="t" style="left:255.00px;top:549.29px;font-size:13.85px;font-weight:400;color:#cc1144;font-family:'Liberation Mono';font-style:normal;-webkit-text-stroke:0;letter-spacing:1.5px;transform:scaleX(0.876);transform-origin:0 0;">22.5672</div>
<div class="t" style="left:255.00px;top:587.09px;font-size:13.85px;font-weight:400;color:#cc1144;font-family:'Liberation Mono';font-style:normal;-webkit-text-stroke:0;letter-spacing:1.5px;transform:scaleX(0.876);transform-origin:0 0;">22.5490</div>
<div class="t" style="left:920.70px;top:436.69px;font-size:13.85px;font-weight:400;color:#2424ff;font-family:'Liberation Mono';font-style:normal;-webkit-text-stroke:0;letter-spacing:1.5px;transform:scaleX(0.872);transform-origin:0 0;">9.3835</div>
<div class="t" style="left:920.70px;top:473.99px;font-size:13.85px;font-weight:400;color:#2424ff;font-family:'Liberation Mono';font-style:normal;-webkit-text-stroke:0;letter-spacing:1.5px;transform:scaleX(0.872);transform-origin:0 0;">9.3832</div>
<div class="t" style="left:920.70px;top:511.29px;font-size:13.85px;font-weight:400;color:#2424ff;font-family:'Liberation Mono';font-style:normal;-webkit-text-stroke:0;letter-spacing:1.5px;transform:scaleX(0.872);transform-origin:0 0;">9.3829</div>
<div class="t" style="left:920.70px;top:548.59px;font-size:13.85px;font-weight:400;color:#2424ff;font-family:'Liberation Mono';font-style:normal;-webkit-text-stroke:0;letter-spacing:1.5px;transform:scaleX(0.872);transform-origin:0 0;">9.3825</div>
<div class="t" style="left:920.70px;top:585.99px;font-size:13.85px;font-weight:400;color:#2424ff;font-family:'Liberation Mono';font-style:normal;-webkit-text-stroke:0;letter-spacing:1.5px;transform:scaleX(0.872);transform-origin:0 0;">9.3822</div>
<div class="t" style="left:323.14px;top:683.60px;font-size:12px;font-weight:400;color:#000;font-family:'Liberation Sans';font-style:normal;transform:rotate(-90deg) scaleX(0.9953);transform-origin:0 0;-webkit-text-stroke:0.1px #000;">04/09 09:56:17</div>
<div class="t" style="left:380.73px;top:683.60px;font-size:12px;font-weight:400;color:#000;font-family:'Liberation Sans';font-style:normal;transform:rotate(-90deg) scaleX(0.9953);transform-origin:0 0;-webkit-text-stroke:0.1px #000;">04/09 09:56:29</div>
<div class="t" style="left:438.32px;top:683.60px;font-size:12px;font-weight:400;color:#000;font-family:'Liberation Sans';font-style:normal;transform:rotate(-90deg) scaleX(0.9953);transform-origin:0 0;-webkit-text-stroke:0.1px #000;">04/09 09:56:41</div>
<div class="t" style="left:495.91px;top:683.60px;font-size:12px;font-weight:400;color:#000;font-family:'Liberation Sans';font-style:normal;transform:rotate(-90deg) scaleX(0.9953);transform-origin:0 0;-webkit-text-stroke:0.1px #000;">04/09 09:56:53</div>
<div class="t" style="left:553.50px;top:683.60px;font-size:12px;font-weight:400;color:#000;font-family:'Liberation Sans';font-style:normal;transform:rotate(-90deg) scaleX(0.9953);transform-origin:0 0;-webkit-text-stroke:0.1px #000;">04/09 09:57:05</div>
<div class="t" style="left:611.09px;top:683.60px;font-size:12px;font-weight:400;color:#000;font-family:'Liberation Sans';font-style:normal;transform:rotate(-90deg) scaleX(0.9953);transform-origin:0 0;-webkit-text-stroke:0.1px #000;">04/09 09:57:17</div>
<div class="t" style="left:668.68px;top:683.60px;font-size:12px;font-weight:400;color:#000;font-family:'Liberation Sans';font-style:normal;transform:rotate(-90deg) scaleX(0.9953);transform-origin:0 0;-webkit-text-stroke:0.1px #000;">04/09 09:57:29</div>
<div class="t" style="left:726.27px;top:683.60px;font-size:12px;font-weight:400;color:#000;font-family:'Liberation Sans';font-style:normal;transform:rotate(-90deg) scaleX(0.9953);transform-origin:0 0;-webkit-text-stroke:0.1px #000;">04/09 09:57:41</div>
<div class="t" style="left:783.86px;top:683.60px;font-size:12px;font-weight:400;color:#000;font-family:'Liberation Sans';font-style:normal;transform:rotate(-90deg) scaleX(0.9953);transform-origin:0 0;-webkit-text-stroke:0.1px #000;">04/09 09:57:53</div>
<div class="t" style="left:841.45px;top:683.60px;font-size:12px;font-weight:400;color:#000;font-family:'Liberation Sans';font-style:normal;transform:rotate(-90deg) scaleX(0.9953);transform-origin:0 0;-webkit-text-stroke:0.1px #000;">04/09 09:58:05</div>
<div class="t" style="left:899.04px;top:683.60px;font-size:12px;font-weight:400;color:#000;font-family:'Liberation Sans';font-style:normal;transform:rotate(-90deg) scaleX(0.9953);transform-origin:0 0;-webkit-text-stroke:0.1px #000;">04/09 09:58:17</div>
<div class="t" style="left:238.48px;top:564.00px;font-size:11.6px;font-weight:400;color:#000;font-family:'Liberation Sans';font-style:normal;transform:rotate(-90deg) scaleX(0.9178);transform-origin:0 0;">TEMPERATURE (°C)</div>
<div class="t" style="left:975.28px;top:538.80px;font-size:11.6px;font-weight:400;color:#000;font-family:'Liberation Sans';font-style:normal;transform:rotate(-90deg) scaleX(0.9686);transform-origin:0 0;">LEVEL (m)</div>
</body></html>
